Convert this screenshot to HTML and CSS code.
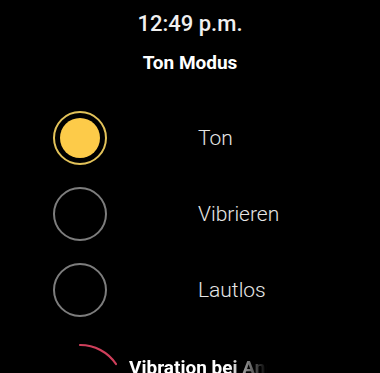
FILE: index.html
```html
<!DOCTYPE html>
<html lang="de">
<head>
  <meta charset="UTF-8" />
  <meta name="viewport" content="width=device-width, initial-scale=1.0" />
  <title>Ton Modus</title>
  <link rel="stylesheet" href="styles.css">
</head>
<body>
  <div id="screen">
    <!-- Clock + title -->
    <div class="time">12:49 p.m.</div>
    <h1 class="title">Ton Modus</h1>

    <!-- Sound mode options -->
    <ul class="modes">
      <li class="mode">
        <span class="radio checked"><span class="dot"></span></span>
        <span class="label">Ton</span>
      </li>
      <li class="mode">
        <span class="radio"></span>
        <span class="label">Vibrieren</span>
      </li>
      <li class="mode">
        <span class="radio"></span>
        <span class="label">Lautlos</span>
      </li>
    </ul>

    <!-- Next item, cut off by the screen -->
    <div class="next">
      <svg class="arc" width="60" height="40" viewBox="0 0 60 40">
        <path d="M 20 7 A 43 43 0 0 1 56 26" fill="none" stroke="#cf3f5b" stroke-width="2.2" stroke-linecap="round" />
      </svg>
      <span class="next-text">Vibration bei Anruf</span>
    </div>
  </div>
</body>
</html>
```

FILE: styles.css
```css
html, body {
  margin: 0;
  background: #000;
}

body {
  font-family: Roboto, "Noto Sans", sans-serif;
  color: #f2f2f2;
  width: 380px;
  height: 373px;
  overflow: hidden;
}

.time {
  text-align: center;
  font-size: 22px;
  line-height: 26px;
  font-weight: 500;
  padding-top: 11px;
  color: #f0f0f0;
}

.title {
  margin: 14px 0 0;
  text-align: center;
  font-size: 19px;
  line-height: 23px;
  font-weight: bold;
  color: #fff;
}

.modes {
  list-style: none;
  margin: 26px 0 0;
  padding: 0;
}

.mode {
  display: flex;
  align-items: center;
  height: 76px;
  padding-left: 53px;
}

.radio {
  box-sizing: border-box;
  width: 54px;
  height: 54px;
  border: 2px solid #7d7d7d;
  border-radius: 50%;
  display: flex;
  justify-content: center;
  align-items: center;
  flex-shrink: 0;
}

.radio.checked {
  border-color: #e3c35a;
}

.dot {
  width: 40px;
  height: 40px;
  border-radius: 50%;
  background: #fdcb49;
}

.label {
  margin-left: 91px;
  font-size: 21px;
  font-weight: 300;
  color: #e6e6e6;
}

.next {
  display: flex;
  align-items: flex-start;
  padding-top: 10px;
}

.arc {
  margin-left: 60px;
  flex-shrink: 0;
}

.next-text {
  margin-left: 9px;
  padding-top: 19px;
  width: 138px;
  white-space: nowrap;
  overflow: hidden;
  font-size: 19px;
  line-height: 22px;
  font-weight: bold;
  color: #fff;
  -webkit-mask-image: linear-gradient(to right, #000 72%, transparent 100%);
  mask-image: linear-gradient(to right, #000 72%, transparent 100%);
}
```
